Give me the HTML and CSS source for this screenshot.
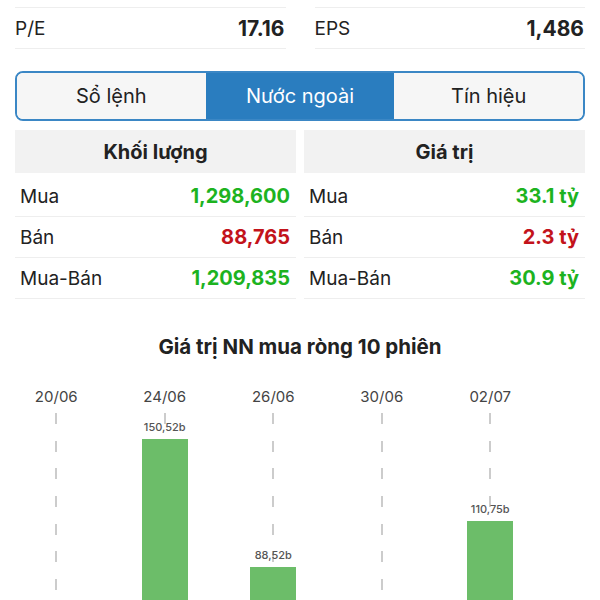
FILE: index.html
```html
<!DOCTYPE html>
<html lang="vi">
<head>
  <meta charset="UTF-8" />
  <meta name="viewport" content="width=device-width, initial-scale=1.0" />
  <title>Nước ngoài</title>
  <link rel="stylesheet" href="styles.css">
</head>
<body>

  <div class="stats">
    <div class="stat"><span>P/E</span><b>17.16</b></div>
    <div class="stat"><span>EPS</span><b>1,486</b></div>
  </div>

  <div class="tabs">
    <div class="tab">Sổ lệnh</div>
    <div class="tab active">Nước ngoài</div>
    <div class="tab">Tín hiệu</div>
  </div>

  <div class="tables">
    <div class="table">
      <div class="table-head">Khối lượng</div>
      <div class="table-row"><span>Mua</span><b class="up">1,298,600</b></div>
      <div class="table-row"><span>Bán</span><b class="down">88,765</b></div>
      <div class="table-row"><span>Mua-Bán</span><b class="up">1,209,835</b></div>
    </div>
    <div class="table">
      <div class="table-head">Giá trị</div>
      <div class="table-row"><span>Mua</span><b class="up">33.1 tỷ</b></div>
      <div class="table-row"><span>Bán</span><b class="down">2.3 tỷ</b></div>
      <div class="table-row"><span>Mua-Bán</span><b class="up">30.9 tỷ</b></div>
    </div>
  </div>

  <div class="chart">
    <h3 class="chart-title">Giá trị NN mua ròng 10 phiên</h3>
    <div class="chart-grid">
      <div class="col">
        <span class="date">20/06</span>
        <div class="plot"></div>
      </div>
      <div class="col">
        <span class="date">24/06</span>
        <div class="plot">
          <div class="bar" style="height: 309px"><span class="bar-label">150,52b</span></div>
        </div>
      </div>
      <div class="col">
        <span class="date">26/06</span>
        <div class="plot">
          <div class="bar" style="height: 181px"><span class="bar-label">88,52b</span></div>
        </div>
      </div>
      <div class="col">
        <span class="date">30/06</span>
        <div class="plot"></div>
      </div>
      <div class="col">
        <span class="date">02/07</span>
        <div class="plot">
          <div class="bar" style="height: 227px"><span class="bar-label">110,75b</span></div>
        </div>
      </div>
    </div>
  </div>

</body>
</html>
```

FILE: styles.css
```css
* { box-sizing: border-box; }

html, body {
  margin: 0;
  padding: 0;
  background: #fff;
  color: #222;
  font-family: Inter, 'Liberation Sans', sans-serif;
  overflow: hidden;
}

b { font-weight: 700; }

/* top key figures */
.stats {
  display: flex;
  gap: 29px;
  padding: 7px 15px 0;
}

.stat {
  flex: 1;
  display: flex;
  justify-content: space-between;
  align-items: center;
  height: 42px;
  padding-right: 1px;
  border-top: 1px solid #eee;
  border-bottom: 1px solid #eee;
  font-size: 19px;
}

.stat b { font-size: 21px; }

/* segmented tabs */
.tabs {
  display: flex;
  height: 50px;
  margin: 22px 15px 0;
  border: 2px solid #3b87c5;
  border-radius: 8px;
  overflow: hidden;
}

.tab {
  flex: 1;
  display: flex;
  justify-content: center;
  align-items: center;
  background: #f6f6f6;
  font-size: 20px;
  color: #222;
}

.tab.active {
  background: #2a7dbf;
  color: #fff;
}

/* volume / value tables */
.tables {
  display: grid;
  grid-template-columns: 1fr 1fr;
  gap: 8px;
  margin: 9px 15px 0;
}

.table-head {
  display: flex;
  justify-content: center;
  align-items: center;
  height: 43px;
  margin-bottom: 3px;
  background: #f2f2f2;
  font-size: 20px;
  font-weight: 700;
}

.table-row {
  display: flex;
  justify-content: space-between;
  align-items: center;
  height: 41px;
  padding: 0 6px 0 5px;
  border-bottom: 1px solid #eee;
  font-size: 19px;
}

.table-row b { font-size: 20px; }

.up { color: #1db31f; }
.down { color: #c3131b; }

/* net buy chart */
.chart-title {
  margin: 36px 0 0;
  text-align: center;
  font-size: 20.5px;
  line-height: 24px;
  font-weight: 700;
}

.chart-grid {
  display: grid;
  grid-template-columns: repeat(5, 108.5px);
  padding: 29px 0 0 2px;
}

.col {
  display: flex;
  flex-direction: column;
  align-items: center;
}

.date {
  font-size: 15px;
  line-height: 18px;
  color: #444;
  margin-bottom: 7px;
}

.plot {
  width: 100%;
  height: 335px;
  display: flex;
  justify-content: center;
  align-items: flex-end;
  background: repeating-linear-gradient(#cccccc 0 11px, transparent 11px 27.7px) center top / 2px 100% no-repeat;
}

.bar {
  position: relative;
  width: 46px;
  background: #6cbd69;
}

.bar-label {
  position: absolute;
  left: 50%;
  bottom: calc(100% + 5px);
  transform: translateX(-50%);
  font-size: 11px;
  line-height: 13px;
  font-weight: 500;
  color: #555;
  white-space: nowrap;
}
```
